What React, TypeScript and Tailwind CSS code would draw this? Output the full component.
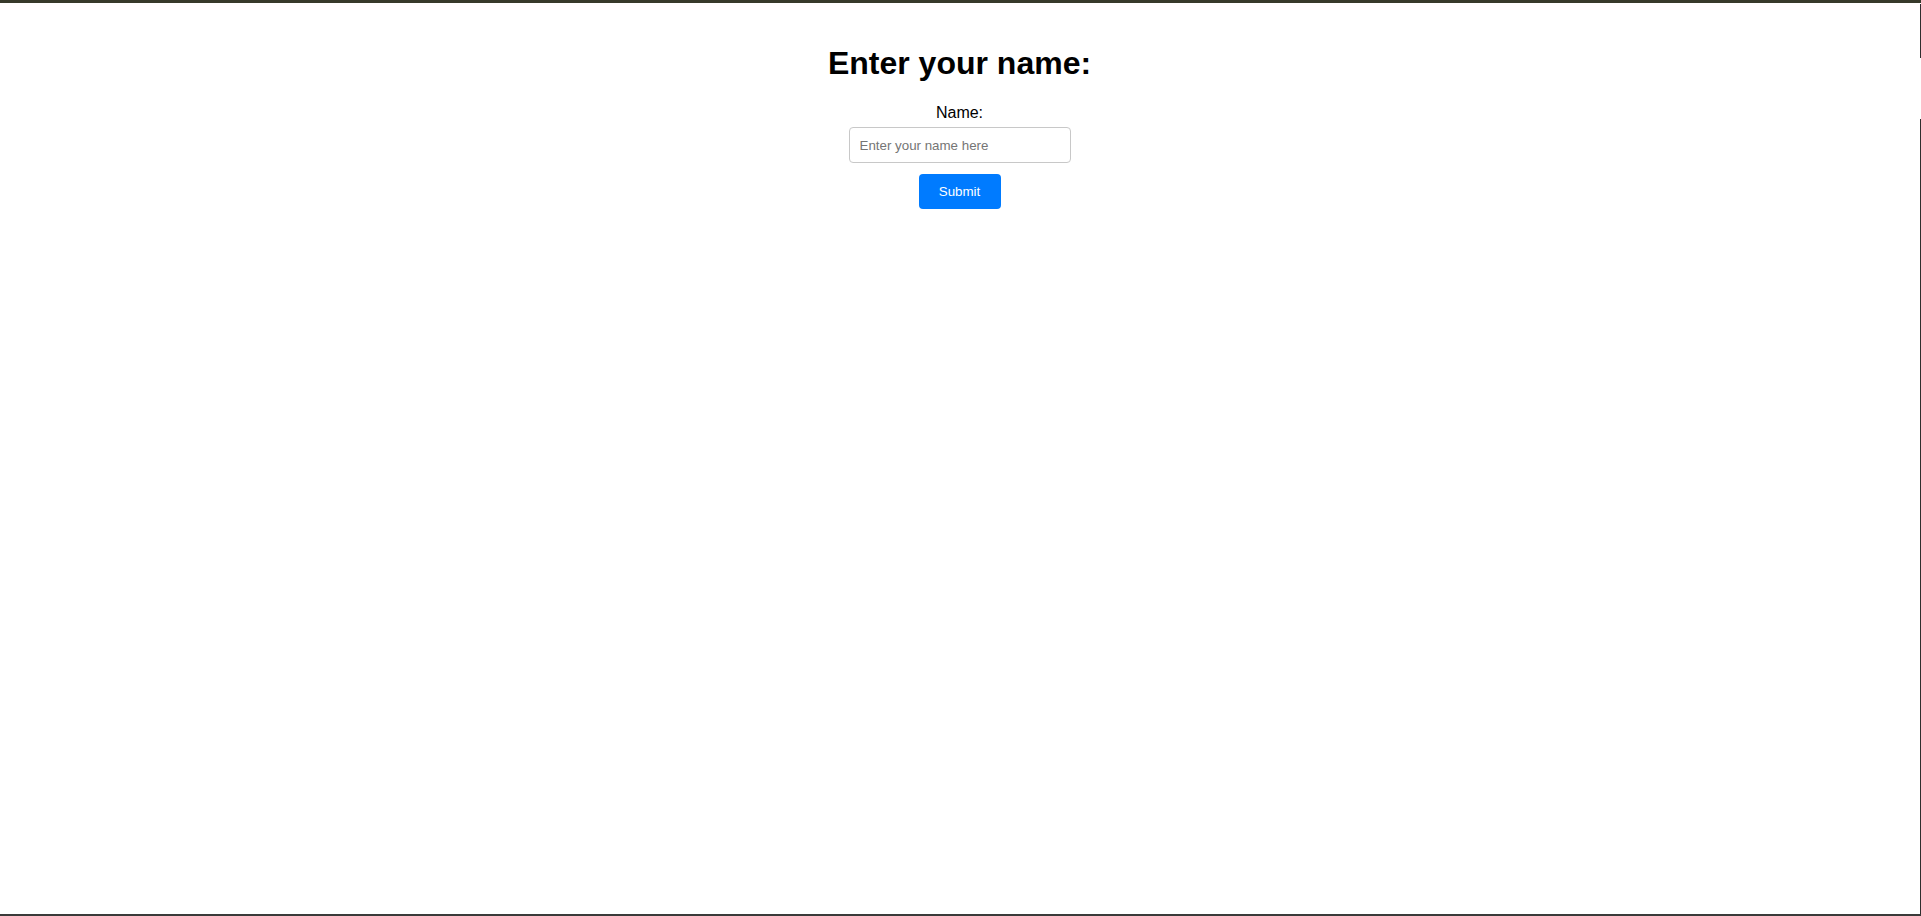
import { useState } from "react";

export default function App() {
  const [name, setName] = useState("");

  const handleSubmit = (e: React.FormEvent) => {
    e.preventDefault();
  };

  return (
    <div
      className="relative h-[916px] w-full overflow-hidden bg-white text-black"
      style={{ fontFamily: '"Liberation Sans", Arial, sans-serif' }}
    >
      {/* window frame edges */}
      <div className="h-[3px] w-full bg-[#363a2a]" />
      <span className="absolute right-0 top-[4px] h-[54px] w-px bg-[#2e2e2e]" />
      <span className="absolute right-0 top-[119px] bottom-0 w-px bg-[#2e2e2e]" />
      <span className="absolute bottom-0 left-0 h-[2px] w-full bg-[#3a3a3a]" />

      <form onSubmit={handleSubmit} className="flex flex-col items-center pt-[42px] pr-[2px]">
        <h1 className="text-[32px] font-bold leading-[37px]">Enter your name:</h1>

        <label htmlFor="name" className="mt-[22px] text-[16px] leading-[18px]">
          Name:
        </label>
        <input
          type="text"
          id="name"
          name="name"
          value={name}
          onChange={(e) => setName(e.target.value)}
          placeholder="Enter your name here"
          className="mt-[5px] h-[36px] w-[222px] rounded-[4px] border border-[#c8c8c8] px-[10px] text-[13.333px] outline-none placeholder:text-[#757575]"
        />

        <button
          type="submit"
          className="mt-[11px] h-[35px] w-[82px] rounded-[4px] bg-[#007bff] text-[13.333px] text-white"
        >
          Submit
        </button>
      </form>
    </div>
  );
}
